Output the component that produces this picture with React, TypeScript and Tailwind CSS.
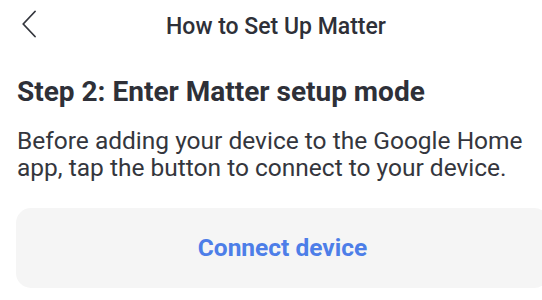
export default function App() {
  return (
    <div className="w-[542px] h-[300px] overflow-hidden bg-white text-[#2e3038] font-['Roboto',sans-serif]">
      <header className="grid grid-cols-[61px_1fr_51px] items-center h-[52px]">
        <div className="flex items-center pl-[22px] -mt-[4px]">
          <svg width="14" height="28" viewBox="0 0 14 28" fill="none">
            <polyline
              points="13,1.5 1.2,14 13,26.5"
              stroke="#34363d"
              strokeWidth="1.8"
              strokeLinecap="round"
              strokeLinejoin="round"
            />
          </svg>
        </div>
        <h1 className="text-center text-[23px] leading-[27px] font-medium">How to Set Up Matter</h1>
        <div />
      </header>

      <section className="px-[17px] pt-[23px]">
        <h2 className="text-[28px] leading-[34px] font-bold">Step 2: Enter Matter setup mode</h2>
        <p className="mt-[18px] text-[24.5px] leading-[27px] text-[#34363d]">
          Before adding your device to the Google Home app, tap the button to connect to your device.
        </p>
      </section>

      <button className="ml-4 mt-[27px] w-[533px] h-[80px] rounded-[15px] bg-[#f5f5f5] flex items-center justify-center text-[24.5px] font-bold text-[#4d7ee8]">
        Connect device
      </button>
    </div>
  );
}
